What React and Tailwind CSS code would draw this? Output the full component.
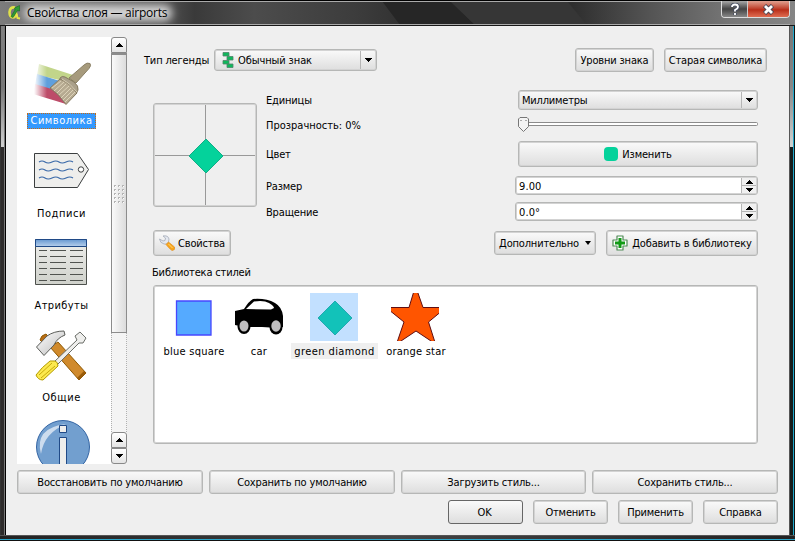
import React from "react";

const FRAME = "rounded-[3px] border border-[#b6b7b6] shadow-[inset_0_0_0_1px_#d3d3d3]";
const FACE = "bg-linear-to-b from-[#fafafa] to-[#dedede]";

function Text({ className = "", children }) {
  return <span className={`block pt-[2px] whitespace-nowrap ${className}`}>{children}</span>;
}

function Button({ className = "", icon, after, children }) {
  return (
    <div className={`flex items-center justify-center p-px ${FRAME} ${FACE} ${className}`}>
      {icon}
      <Text>{children}</Text>
      {after}
    </div>
  );
}

function Arrow({ up = false, className = "" }) {
  return (
    <svg className={className} width="7" height="4" viewBox="0 0 7 4" shapeRendering="crispEdges">
      <path d={up ? "M3 0h1v1h1v1h1v1h1v1H0V3h1V2h1V1h1z" : "M0 0h7v1H6v1H5v1H4v1H3V3H2V2H1V1H0z"} fill="#000" />
    </svg>
  );
}

function Combo({ className = "", children }) {
  return (
    <div className={`flex p-px ${FRAME} ${FACE} ${className}`}>
      <div className="flex flex-1 items-center">{children}</div>
      <div className="flex w-[15px] items-center justify-center border-l border-[#b5b5b5]">
        <Arrow />
      </div>
    </div>
  );
}

function Spin({ value }) {
  return (
    <div className={`flex h-[19px] w-[243px] bg-white p-px ${FRAME}`}>
      <div className="flex flex-1 items-center pl-[2px]"><Text className="tracking-[0.1px]">{value}</Text></div>
      <div className="flex w-[15px] flex-col border-l border-[#b5b5b5] bg-[#f0f0f0]">
        <div className="flex h-[7px] items-center justify-center"><Arrow up /></div>
        <div className="flex h-[8px] items-center justify-center border-t border-[#b5b5b5]"><Arrow /></div>
      </div>
    </div>
  );
}

function BrushIcon() {
  return (
    <svg width="56" height="56" viewBox="35 51 56 56">
      <defs>
        <linearGradient id="fade" x1="34" x2="47" y1="0" y2="0" gradientUnits="userSpaceOnUse">
          <stop offset="0" stopColor="#fff" />
          <stop offset="1" stopColor="#fff" stopOpacity="0" />
        </linearGradient>
      </defs>
      <path d="M39 64L73 75V83L37 75z" fill="#c2d58a" />
      <path d="M37 74L60 81L54 92L35 85z" fill="#5f9fdc" />
      <path d="M35 84L55 90L66 104L33 94z" fill="#bd4c69" />
      <path d="M32 62H47V98H32z" fill="url(#fade)" />
      <path d="M69 78L84 65Q87 62 90 63.500Q91.500 65.500 89 68.500L76 83z" fill="#a69a7c" stroke="#8a8066" />
      <path d="M60 78Q62 75.500 65 77L74 82Q79 86 78 90L76 94Q72 89 66 85L60 80z" fill="#aaa08a" stroke="#857a60" />
      <path d="M60 79Q70 83 77 93L66 104.500Q59 94 50 88z" fill="#b6aa91" stroke="#857a60" />
      <path d="M61 81L52 88M64 82L54 91M66 84L57 93M69 86L59 95M71 88L61 98M73 90L63 100M75 92L65 102" stroke="#ddd3b9" strokeWidth="1" />
      <path d="M62 79Q70 83 77 92" stroke="#d6ccb3" fill="none" />
    </svg>
  );
}

function TagIcon() {
  return (
    <svg width="56" height="56" viewBox="35 143 56 56">
      <path d="M34.500 153.500H77.500L88.500 169.500L77.500 187.500H34.500z" fill="#eeeeec" stroke="#3b3e3f" />
      <circle cx="81" cy="169.500" r="2.700" fill="#fff" stroke="#3b3e3f" />
      <path d="M39 162q3 -2 6 0t7 0t7 0t7 0t7 0M39 170q3 -2 6 0t7 0t7 0t7 0t7 0M39 178q3 -2 6 0t7 0t7 0t7 0t7 0" fill="none" stroke="#3767a8" strokeWidth="1.100" />
    </svg>
  );
}

function TableIcon() {
  return (
    <svg width="56" height="56" viewBox="35 235 56 56">
      <defs>
        <linearGradient id="tbody" x1="0" x2="0" y1="0" y2="1"><stop stopColor="#efefec" /><stop offset="1" stopColor="#cfd1cb" /></linearGradient>
        <linearGradient id="thead" x1="0" x2="0" y1="0" y2="1"><stop stopColor="#6798d0" /><stop offset="1" stopColor="#b7d0ec" /></linearGradient>
      </defs>
      <path d="M35.500 239.500H86.500V284.500H35.500z" fill="url(#tbody)" stroke="#4d504c" />
      <path d="M35.500 239.500H86.500V246.500H35.500z" fill="url(#thead)" stroke="#204a87" />
      <path d="M39 250.500h8M50 250.500h16M70 250.500h13M39 256.500h8M50 256.500h16M70 256.500h13M39 262.500h8M50 262.500h16M70 262.500h13M39 268.500h8M50 268.500h16M70 268.500h13M39 274.500h8M50 274.500h16M70 274.500h13M39 280.500h8M50 280.500h16M70 280.500h13" stroke="#50534f" />
    </svg>
  );
}

function ToolsIcon() {
  return (
    <svg width="56" height="56" viewBox="35 327 56 56">
      <defs>
        <linearGradient id="steel" x1="0" x2="1" y1="0" y2="1"><stop stopColor="#fff" /><stop offset="1" stopColor="#bbb" /></linearGradient>
      </defs>
      <path d="M40 340Q41 335 46 334L50 338L43 343z" fill="#b96d14" stroke="#8f5902" />
      <path d="M50 347L58 342L86 373L79 380z" fill="#d08a2c" stroke="#8f5902" />
      <path d="M86 373L79 380L77 378L84 371z" fill="#9a5c0a" />
      <path d="M36.500 347L47 336Q54 331 64 331L65 335Q57 338 54 345L44 355.500z" fill="url(#steel)" stroke="#5b5d59" />
      <path d="M54 362L77 340L75 336L80 332L86 338L83 343L79 343L57 365z" fill="#eeeeec" stroke="#6b6e69" />
      <path d="M55 361Q58 362 58 366L43 380Q38 380 36 375Q42 367 50 361z" fill="#fce94f" stroke="#b39b00" />
      <path d="M39 375L52 363M41 378L55 366" stroke="#c8ab0b" />
    </svg>
  );
}

function InfoIcon() {
  return (
    <svg width="56" height="56" viewBox="35 419 56 56">
      <circle cx="63" cy="447" r="26.500" fill="#729fcf" stroke="#3465a4" />
      <path d="M41 454Q34 428 66 424Q44 433 41 454z" fill="#d6e2f1" opacity=".9" />
      <path d="M59.500 425.500h7v7h-7zM59.500 437.500h7V476h-7z" fill="#eeeeec" stroke="#204a87" />
    </svg>
  );
}

function SideItem({ icon, label, selected = false, className = "" }) {
  return (
    <div className="flex h-[92px] shrink-0 flex-col items-center pr-[5px] text-[11px]">
      <div className="ml-[3px] h-[56px] w-[56px] overflow-visible [&>svg]:overflow-visible">{icon}</div>
      <div
        className={`mt-[6px] h-[16px] whitespace-nowrap ${className} ${
          selected ? "w-[69px] border border-dotted border-[#c96a10] bg-[#3399ff] text-center leading-[14px] text-white" : "leading-[17px]"
        }`}
      >
        {label}
      </div>
    </div>
  );
}

const CAP = "flex h-[16px] items-center justify-center border border-[#888] bg-linear-to-b from-white to-[#e4e4e4]";

function Sidebar() {
  return (
    <div className="flex h-[427px] w-[110px]">
      <div className="flex w-[94px] flex-col overflow-hidden bg-white pt-[14px]">
        <SideItem icon={<BrushIcon />} label="Символика" selected className="tracking-[0.5px]" />
        <SideItem icon={<TagIcon />} label="Подписи" className="tracking-[0.55px]" />
        <SideItem icon={<TableIcon />} label="Атрибуты" className="tracking-[0.4px]" />
        <SideItem icon={<ToolsIcon />} label="Общие" className="tracking-[0.6px]" />
        <SideItem icon={<InfoIcon />} label="" />
      </div>
      <div className="flex w-[16px] flex-col bg-[#f4f4f4]">
        <div className={`${CAP} rounded-t-[3px]`}><Arrow up /></div>
        <div className="flex h-[280px] items-center justify-center border border-t-2 border-[#8c8c8c] bg-linear-to-r from-[#fafafa] to-[#dcdcdc]">
          <div className="grid grid-cols-3 gap-[2px]">
            {Array.from({ length: 15 }, (_, i) => (
              <span key={i} className="h-[2px] w-[2px] border-t border-l border-[#b4b4b4] bg-white" />
            ))}
          </div>
        </div>
        <div className="flex-1 border-x border-dotted border-[#b0b0b0]" />
        <div className={`${CAP} rounded-t-[3px]`}><Arrow up /></div>
        <div className={`${CAP} rounded-b-[3px]`}><Arrow /></div>
      </div>
    </div>
  );
}

function LegendIcon() {
  return (
    <svg width="12" height="16" viewBox="0 0 12 16">
      <path d="M1 .5h6v3.500H1zM5 4.500h6v3.500H5zM1 8.500h6v3.500H1zM5 12h6v3.500H5z" fill="#0fb85b" stroke="#51836b" strokeWidth=".8" />
    </svg>
  );
}

function WrenchIcon() {
  return (
    <svg className="mr-[3px]" width="16" height="16" viewBox="0 0 16 16">
      <path d="M4 1Q9 0 10 4L9.500 7L8 9L5 9Q1 8 .5 4L4 6L6 5.500L6.500 3z" fill="#e4e8f0" stroke="#a5abb8" strokeWidth=".8" />
      <path d="M7 9.500L9.500 7L15.500 12Q16.500 15 13.500 15.500Q12 15.500 7 9.500z" fill="#f8a51b" stroke="#e0912a" strokeWidth=".7" />
      <path d="M9.500 9L13.500 13" stroke="#ffd777" />
    </svg>
  );
}

function PlusIcon() {
  return (
    <svg className="mr-[4px]" width="16" height="16" viewBox="0 0 16 16">
      <path d="M5 1h6v4h4v6h-4v4H5v-4H1V5h4z" fill="#fff" stroke="#4f8a56" strokeWidth="1.200" strokeLinejoin="round" />
      <path d="M6.500 3h3v3.500H13v3H9.500V13h-3V9.500H3v-3h3.500z" fill="#119a16" />
    </svg>
  );
}

function Preview() {
  return (
    <div className={`h-[104px] w-[104px] p-px ${FRAME}`}>
      <svg width="100" height="100" viewBox="155 105 100 100">
        <path d="M205.500 105V205M155 155.500H255" stroke="#999" />
        <path d="M206 139L223 156L206 173L189 156z" fill="#04d29b" stroke="#14ad86" />
      </svg>
    </div>
  );
}

function Slider() {
  return (
    <svg width="240" height="16" viewBox="518 117 240 16">
      <rect x="520.500" y="122.500" width="237" height="3" rx="1" fill="#fff" stroke="#8b8b8b" />
      <path d="M520 117.500H527L528.500 119V126.500L523.500 131.500L518.500 126.500V119z" fill="#f4f4f4" stroke="#777" />
      <path d="M520 120.500h2M525 120.500h2" stroke="#aaa" />
    </svg>
  );
}

const CAPTION = "mt-[2px] h-[16px] whitespace-nowrap leading-[17px]";

function Library() {
  return (
    <div className={`flex h-[159px] w-[605px] bg-white px-px pt-[7px] ${FRAME}`}>
      <div className="ml-[1px] flex w-[76px] flex-col items-center">
        <svg width="48" height="48" viewBox="170 293 48 48"><path d="M176.500 301H211V335H176.500z" fill="#55aaff" stroke="#4747ff" strokeWidth="1.300" /></svg>
        <div className={`${CAPTION} tracking-[0.25px]`}>blue square</div>
      </div>
      <div className="flex w-[56px] flex-col items-center">
        <svg className="-ml-[3px]" width="48" height="48" viewBox="235 293 48 48">
          <path d="M235 311L244 309Q249 301 253 299Q266 298 275 303Q282 307 283 316V327L278 328L262 327L244 327L235 325z" fill="#000" />
          <path d="M246 309L254 301.500Q264 300 269 303Q274 306 274 308L271 309.500z" fill="#fff" />
          <ellipse cx="244" cy="326.500" rx="6.500" ry="7.500" fill="#000" />
          <ellipse cx="276" cy="327" rx="6.500" ry="7.500" fill="#000" />
          <ellipse cx="244" cy="326" rx="4.500" ry="5.500" fill="#c0bfc0" />
          <ellipse cx="276" cy="326" rx="4.700" ry="5.700" fill="#c0bfc0" />
        </svg>
        <div className={`${CAPTION} -ml-[2px] tracking-[0.25px]`}>car</div>
      </div>
      <div className="ml-[3px] flex w-[87px] flex-col items-center">
        <svg className="-ml-[2px] bg-[#c2e0ff]" width="48" height="48" viewBox="310 293 48 48"><path d="M335 301L352 318L335 335L318 318z" fill="#12c2b9" stroke="#22a9b0" /></svg>
        <div className={`${CAPTION} w-[87px] bg-[#efefef] text-center tracking-[0.4px]`}>green diamond</div>
      </div>
      <div className="flex w-[76px] flex-col items-center">
        <svg className="-ml-[2px]" width="48" height="48" viewBox="391 293 48 48"><path d="M415.500 286L423 307.500H446L428.500 322L435.500 344L416 331L396.500 344L404 322L386 307.500H409z" fill="#ff5500" stroke="#5f0d12" /></svg>
        <div className={`${CAPTION} tracking-[0.2px]`}>orange star</div>
      </div>
    </div>
  );
}

function Row({ label, className, labelClass = "", children }) {
  return (
    <div className={`flex items-center justify-between ${className}`}>
      <Text className={labelClass}>{label}</Text>
      {children}
    </div>
  );
}

function Main() {
  return (
    <div className="flex w-[625px] flex-col pt-[11px]">
      <div className="flex h-[24px] items-center">
        <Text className="w-[71px] pl-px">Тип легенды</Text>
        <Combo className="h-[22px] w-[163px]">
          <span className="ml-[6px] mr-[4px]"><LegendIcon /></span>
          <Text className="tracking-[-0.1px]">Обычный знак</Text>
        </Combo>
        <Button className="ml-[198px] h-[24px] w-[79px]">Уровни знака</Button>
        <Button className="ml-[10px] h-[24px] w-[103px]">Старая символика</Button>
      </div>
      <div className="mt-[18px] ml-[10px] flex h-[131px] w-[605px]">
        <div className="pt-[13px]"><Preview /></div>
        <div className="ml-[9px] flex flex-1 flex-col">
          <Row label="Единицы" className="h-[20px]"><Combo className="h-[20px] w-[240px]"><Text className="pl-[2px] tracking-[-0.2px]">Миллиметры</Text></Combo></Row>
          <Row label="Прозрачность: 0%" labelClass="tracking-[0px]" className="mt-[7px] h-[16px]"><Slider /></Row>
          <Row label="Цвет" className="mt-[8px] h-[26px]">
            <Button className="h-[26px] w-[240px]" icon={<span className="mr-[4px] h-[14px] w-[14px] rounded-[4px] bg-[#04d29b]" />}>Изменить</Button>
          </Row>
          <Row label="Размер" className="mt-[9px] h-[19px]"><Spin value="9.00" /></Row>
          <Row label="Вращение" className="mt-[7px] h-[19px]"><Spin value="0.0°" /></Row>
        </div>
      </div>
      <div className="mt-[9px] ml-[10px] flex h-[26px] w-[605px] items-center">
        <Button className="h-[26px] w-[78px]" icon={<WrenchIcon />}>Свойства</Button>
        <Button className="ml-auto h-[24px] w-[102px]" after={<svg className="ml-[6px]" width="6" height="4"><path d="M0 0h6L3 4z" /></svg>}>
          Дополнительно
        </Button>
        <Button className="ml-[10px] h-[26px] w-[152px]" icon={<PlusIcon />}>Добавить в библиотеку</Button>
      </div>
      <div className="mt-[8px] ml-[9px] h-[16px] leading-[18px]">Библиотека стилей</div>
      <div className="mt-[5px] ml-[10px]"><Library /></div>
    </div>
  );
}

function TitleBar() {
  return (
    <div className="relative flex h-[26px] shrink-0 items-start overflow-hidden border-t border-b border-t-black border-b-[#181818] bg-[#444]">
      <svg className="absolute inset-0" width="795" height="24">
        <defs>
          <linearGradient id="bar" x1="0" x2="795" y1="0" y2="0" gradientUnits="userSpaceOnUse">
            <stop stopColor="#7c7c7c" /><stop offset=".05" stopColor="#707070" /><stop offset=".2" stopColor="#555" /><stop offset=".245" stopColor="#3a3a3a" /><stop offset=".32" stopColor="#4c4c4c" />
            <stop offset=".45" stopColor="#3c3c3c" /><stop offset=".5" stopColor="#333" /><stop offset=".72" stopColor="#2e2e2e" /><stop offset=".82" stopColor="#555" /><stop offset=".92" stopColor="#777" /><stop offset="1" stopColor="#858585" />
          </linearGradient>
          <filter id="soft" x="-20%" width="140%" y="-80%" height="260%"><feGaussianBlur stdDeviation="4" /></filter>
        </defs>
        <path d="M0 0H795V24H0z" fill="url(#bar)" />
        <path d="M382 0H450L475 24H400z" fill="#262626" />
        <path d="M450 0H567L587 24H475z" fill="#363636" />
        <rect x="24" y="4" width="148" height="16" rx="7" fill="#d4d4d4" filter="url(#soft)" />
        <path d="M5 .5H790M5 23.500H790" stroke="#aaa" />
      </svg>
      <div className="relative flex w-full">
        <svg className="mt-[4px] ml-[7px]" width="16" height="16" viewBox="0 0 16 16">
          <path d="M8 2.500Q3 1.500 2.500 7Q2.500 12.500 6 12.500Q8.500 12.500 9.500 9" fill="none" stroke="#dfe04a" strokeWidth="2.600" />
          <path d="M9 7L10.500 13L13 13.500" stroke="#e9e64a" strokeWidth="2" fill="none" />
          <path d="M4 11.500L8 5L7.500 3L12.500 .5V6L10.500 5.500L6 12.500z" fill="#2f9a35" stroke="#176b20" strokeWidth=".6" />
        </svg>
        <div className="mt-[3px] ml-[4px] font-['Open_Sans','Noto_Sans',sans-serif] text-[12px] leading-[18px] tracking-[-0.25px] whitespace-nowrap text-black">Свойства слоя — airports</div>
        <div className="mr-[5px] ml-auto flex h-[17px] w-[69px] overflow-hidden rounded-b-[4px] border border-t-0 border-[#ddd]">
          <div className="flex w-[26px] items-center justify-center border-r border-[#ccc] bg-linear-to-b from-[#aaa] from-0% via-[#444] via-50% to-[#888] to-100%">
            <svg width="10" height="13" viewBox="0 0 10 13"><path d="M2 4Q2 1.500 5 1.500T8 4Q8 5.500 5 7V8.500M5 10V12" fill="none" stroke="#444b60" strokeWidth="3.400" /><path d="M2 4Q2 1.500 5 1.500T8 4Q8 5.500 5 7V8.500M5 10V12" fill="none" stroke="#fff" strokeWidth="1.800" /></svg>
          </div>
          <div className="flex flex-1 items-center justify-center bg-linear-to-b from-[#e0a090] from-0% via-[#b92d18] via-55% to-[#df6b50] to-100%">
            <svg width="13" height="11" viewBox="0 0 13 11"><path d="M2.500 1.500L10.500 9.500M10.500 1.500L2.500 9.500" stroke="#4e4653" strokeWidth="4.600" /><path d="M3 2L10 9M10 2L3 9" stroke="#fff" strokeWidth="2.800" /></svg>
          </div>
        </div>
      </div>
    </div>
  );
}

export default function App() {
  return (
    <div className="flex h-[541px] w-[795px] flex-col overflow-hidden bg-[#222] font-['DejaVu_Sans_Condensed','DejaVu_Sans',sans-serif] text-[11px] leading-[14px] tracking-[-0.17px] text-black">
      <TitleBar />
      <div className="flex h-[509px]">
        <div className="flex w-[6px]">
          <div className="w-px bg-[#333]" />
          <div className="flex w-[3px] flex-col">
            <div className="h-[121px] bg-linear-to-b from-[#808080] via-[#777] to-[#d0d0d0]" />
            <div className="flex-1 bg-[#2d2b2b]" />
          </div>
          <div className="w-px bg-[#777]" />
          <div className="w-px bg-black" />
        </div>
        <div className="flex w-[783px] flex-col bg-[#efefef] pt-[11px] pl-[11px]">
          <div className="flex h-[427px]">
            <Sidebar />
            <div className="ml-[16px]"><Main /></div>
          </div>
          <div className="mt-[6px] flex gap-[6px]">
            <Button className="h-[24px] w-[186px]">Восстановить по умолчанию</Button>
            <Button className="h-[24px] w-[186px]">Сохранить по умолчанию</Button>
            <Button className="h-[24px] w-[185px]">Загрузить стиль...</Button>
            <Button className="h-[24px] w-[186px]">Сохранить стиль...</Button>
          </div>
          <div className="mt-[6px] flex justify-end gap-[10px] pr-[11px]">
            <div className={`flex h-[24px] w-[75px] items-center justify-center rounded-[3px] border border-[#666] ${FACE}`}><Text className="pr-[2px]">OK</Text></div>
            <Button className="h-[24px] w-[75px]">Отменить</Button>
            <Button className="h-[24px] w-[75px]">Применить</Button>
            <Button className="h-[24px] w-[75px]">Справка</Button>
          </div>
        </div>
        <div className="flex w-[6px]">
          <div className="w-px bg-[#555]" />
          <div className="flex w-[3px] flex-col">
            <div className="h-[121px] bg-linear-to-b from-[#777] via-[#888] to-[#d0d4d3]" />
            <div className="flex-1 bg-[#161c1b]" />
          </div>
          <div className="w-px bg-[#1fa9cc]" />
          <div className="w-px bg-[#111]" />
        </div>
      </div>
      <div className="flex h-[6px] flex-col">
        <div className="h-px shrink-0 bg-[#555]" />
        <div className="h-[3px] shrink-0 bg-linear-to-r from-[#222] via-[#444] to-[#222]" />
        <div className="h-px shrink-0 bg-[#2ba6c9]" />
        <div className="h-px shrink-0 bg-[#111]" />
      </div>
    </div>
  );
}
